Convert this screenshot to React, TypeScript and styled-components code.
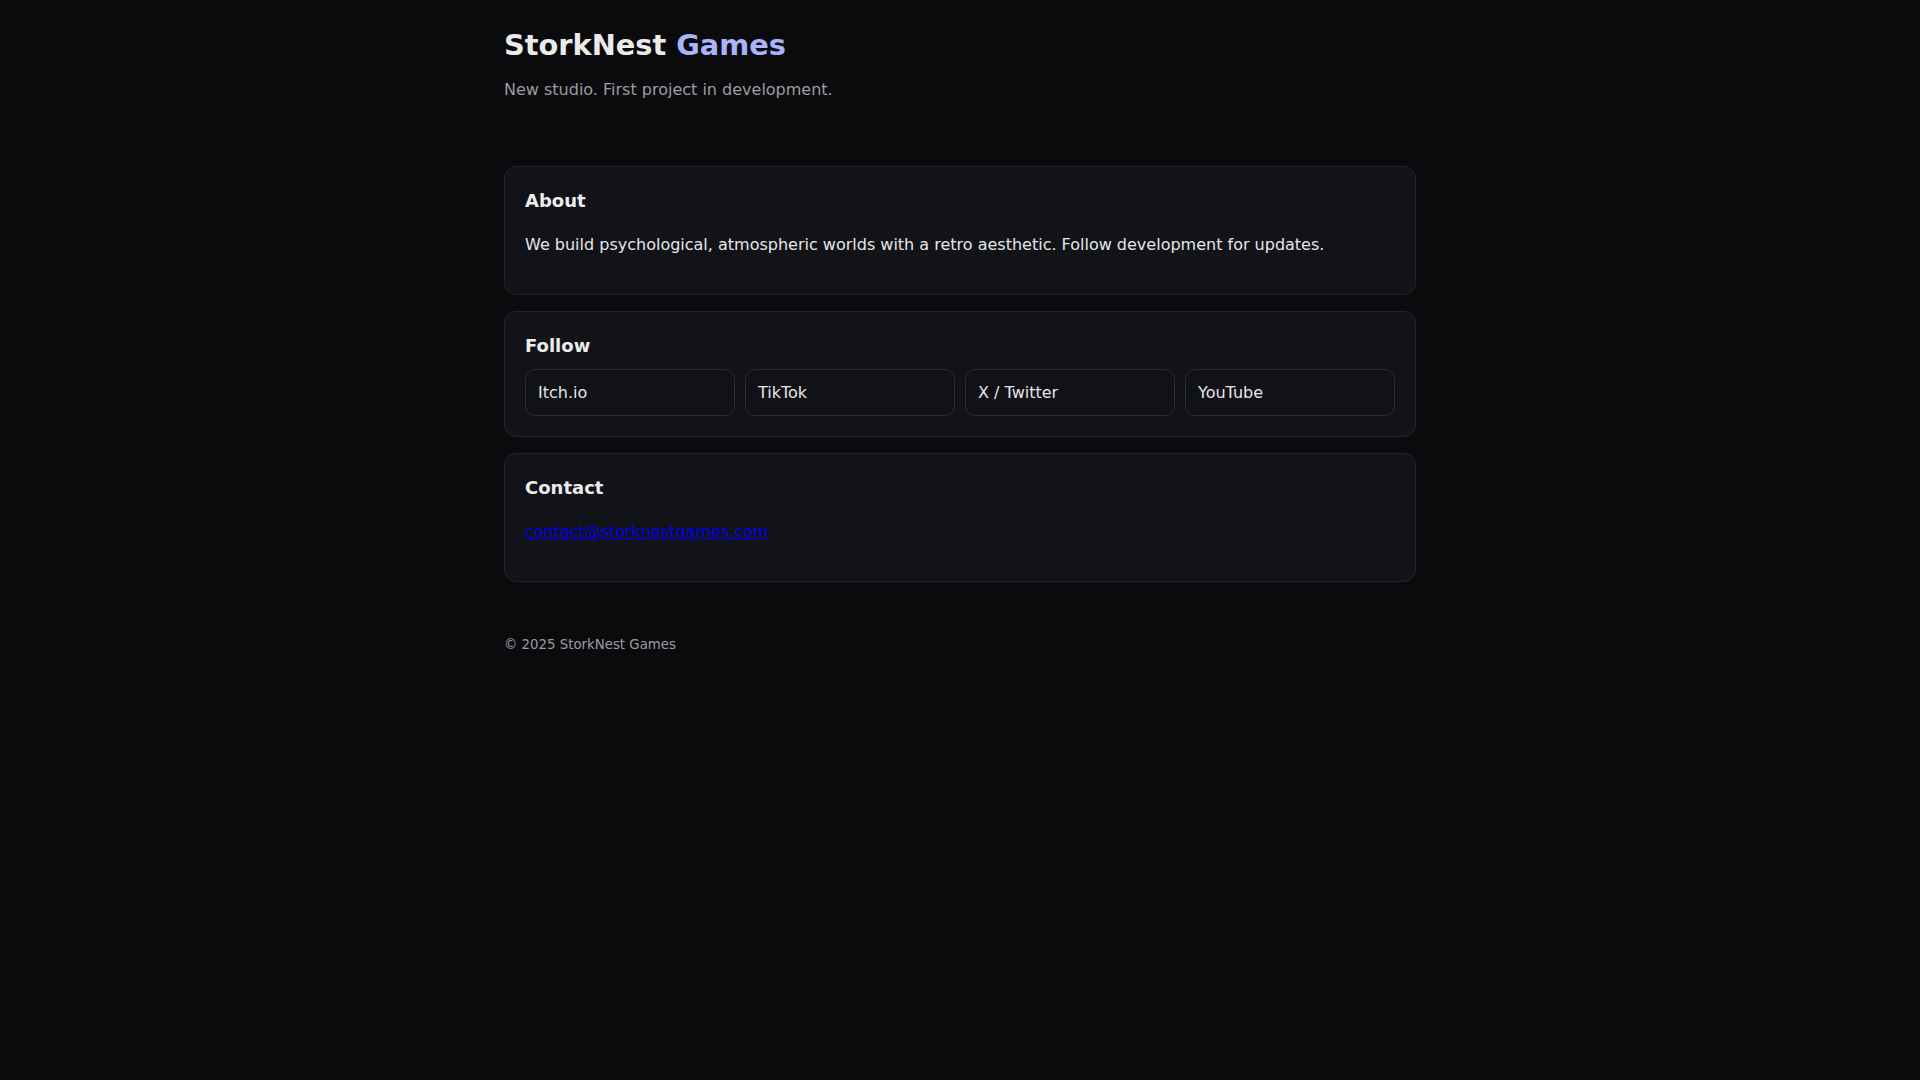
import React from "react";
import styled, { createGlobalStyle } from "styled-components";

const GlobalStyle = createGlobalStyle`
  html, body {
    margin: 0;
    padding: 0;
    background: #0b0b0e;
    color: #e6e6e6;
    font-family: "DejaVu Sans", Verdana, sans-serif;
    line-height: 1.6;
  }
  * { box-sizing: border-box; }
`;

const Page = styled.div`
  max-width: 960px;
  margin: 0 auto;
  padding: 28px 24px 40px;
`;

const Header = styled.header`
  margin-bottom: 64px;
`;

const Title = styled.h1`
  margin: 0;
  font-size: 28.8px;
  line-height: 1.2;
  font-weight: 700;
  color: #ebebeb;
`;

const Accent = styled.span`
  color: #aab4fa;
`;

const Tagline = styled.p`
  margin: 14px 0 0;
  font-size: 16px;
  color: #9c9ca2;
`;

const Main = styled.main`
  display: flex;
  flex-direction: column;
  gap: 16px;
`;

const Card = styled.section`
  background: #121319;
  border: 1px solid #22242d;
  border-radius: 12px;
  padding: 20px;
`;

const CardTitle = styled.h2`
  margin: 0 0 8.5px;
  font-size: 18px;
  font-weight: 700;
  color: #ebebeb;
`;

const Text = styled.p`
  margin: 16px 0;
  font-size: 16px;
  color: #e6e6e6;
`;

const LinkGrid = styled.div`
  display: grid;
  grid-template-columns: repeat(4, 1fr);
  gap: 10px;
`;

const LinkButton = styled.a`
  display: block;
  padding: 10px 12px;
  border: 1px solid #2a2c36;
  border-radius: 10px;
  background: #111217;
  color: #e6e6e6;
  font-size: 16px;
  text-decoration: none;
`;

const Mail = styled.a`
  color: #0000ee;
`;

const Footer = styled.footer`
  margin-top: 52px;
  font-size: 13.33px;
  color: #9c9ca2;
`;

const links = ["Itch.io", "TikTok", "X / Twitter", "YouTube"];

export default function App() {
  return (
    <>
      <GlobalStyle />
      <Page>
        <Header>
          <Title>
            StorkNest <Accent>Games</Accent>
          </Title>
          <Tagline>New studio. First project in development.</Tagline>
        </Header>
        <Main>
          <Card>
            <CardTitle>About</CardTitle>
            <Text>
              We build psychological, atmospheric worlds with a retro aesthetic. Follow development for updates.
            </Text>
          </Card>
          <Card>
            <CardTitle>Follow</CardTitle>
            <LinkGrid>
              {links.map((l) => (
                <LinkButton key={l} href="#">
                  {l}
                </LinkButton>
              ))}
            </LinkGrid>
          </Card>
          <Card>
            <CardTitle>Contact</CardTitle>
            <Text>
              <Mail href="mailto:contact@storknestgames.com">contact@storknestgames.com</Mail>
            </Text>
          </Card>
        </Main>
        <Footer>© 2025 StorkNest Games</Footer>
      </Page>
    </>
  );
}
